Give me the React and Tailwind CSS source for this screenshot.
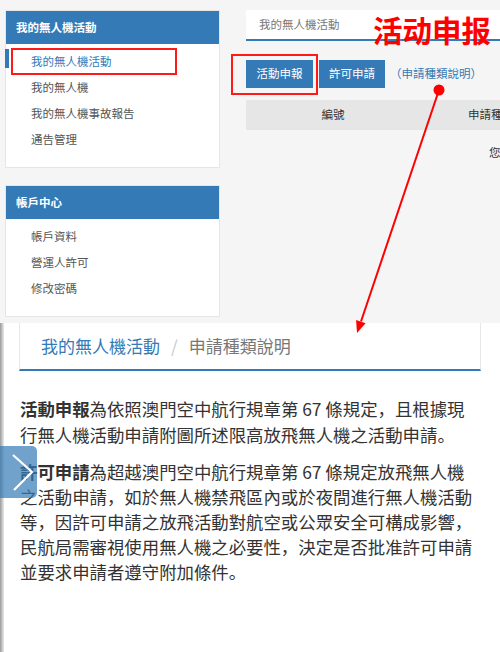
import React from "react";

const sideMenus = [
  {
    title: "我的無人機活動",
    items: ["我的無人機活動", "我的無人機", "我的無人機事故報告", "通告管理"],
    active: 0,
  },
  {
    title: "帳戶中心",
    items: ["帳戶資料", "營運人許可", "修改密碼"],
    active: -1,
  },
];

function SidePanel({ title, items, active }) {
  return (
    <div className="bg-white border border-[#e6e6e6]">
      <div className="h-[33px] bg-[#337ab7] text-white font-bold text-[11.5px] pl-[10px] flex items-center">
        {title}
      </div>
      <ul className="pt-[5px] pb-[14px]">
        {items.map((item, i) => (
          <li
            key={item}
            className={
              "relative h-[26px] flex items-center pl-[25px] text-[11.5px] " +
              (i === active ? "text-[#337ab7]" : "text-[#555]")
            }
          >
            {i === active && <span className="absolute left-[-1px] top-0 w-[4px] h-[19px] bg-[#337ab7]" />}
            {item}
          </li>
        ))}
      </ul>
    </div>
  );
}

export default function App() {
  return (
    <div className="relative w-[500px] h-[652px] overflow-hidden bg-white font-['Noto_Sans_CJK_SC','Noto_Sans_CJK_TC',sans-serif]">
      {/* desktop view */}
      <section className="h-[323px] bg-[#f5f5f5] flex pt-[10px] pl-[5px] overflow-hidden">
        <aside className="w-[215px] shrink-0 flex flex-col gap-[17px]">
          {sideMenus.map((m) => (
            <SidePanel key={m.title} {...m} />
          ))}
        </aside>

        <main className="ml-[26px] w-[400px] shrink-0">
          <div className="h-[31px] bg-white border-b-2 border-[#337ab7] pl-[13px] flex items-center text-[11.5px] text-[#777]">
            我的無人機活動
          </div>

          <div className="mt-[19px] flex items-center">
            <button className="h-[28px] w-[67px] bg-[#337ab7] text-white text-[11.5px]">活動申報</button>
            <button className="ml-[6px] h-[28px] w-[66px] bg-[#337ab7] text-white text-[11.5px]">許可申請</button>
            <span className="ml-[5px] text-[11.5px] text-[#337ab7]">（申請種類說明）</span>
          </div>

          <div className="mt-[12px] h-[30px] bg-[#e6e6e6] flex items-center text-[11.5px] text-[#333]">
            <div className="w-[174px] text-center">編號</div>
            <div className="ml-[48px]">申請種類</div>
          </div>

          <div className="mt-[14px] pl-[243px] text-[11.5px] text-[#333]">您尚未有任何申請記錄</div>
        </main>
      </section>

      {/* mobile view */}
      <section className="relative h-[329px] flex bg-white">
        <div className="w-[4px] shrink-0 bg-gradient-to-r from-[#9a9a9a] to-[#ededed]" />
        <div className="flex-1">
          <div className="ml-[15px] w-[462px] h-[48px] border-x border-[#e8e8e8] border-b-2 border-b-[#337ab7] flex items-center pl-[21px] text-[17px]">
            <span className="text-[#337ab7]">我的無人機活動</span>
            <span className="mx-[11px] text-[#c8c8c8]">/</span>
            <span className="text-[#777]">申請種類說明</span>
          </div>

          <div className="mt-[25px] pl-[16px] text-[17.4px] leading-[25.5px] text-[#333] whitespace-nowrap">
            <p>
              <b>活動申報</b>為依照澳門空中航行規章第 67 條規定，且根據現
              <br />
              行無人機活動申請附圖所述限高放飛無人機之活動申請。
            </p>
            <p className="mt-[12px] leading-[25px]">
              <b>許可申請</b>為超越澳門空中航行規章第 67 條規定放飛無人機
              <br />
              之活動申請，如於無人機禁飛區內或於夜間進行無人機活動
              <br />
              等，因許可申請之放飛活動對航空或公眾安全可構成影響，
              <br />
              民航局需審視使用無人機之必要性，決定是否批准許可申請
              <br />
              並要求申請者遵守附加條件。
            </p>
          </div>
        </div>

        <div className="absolute left-0 top-[123px] w-[37px] h-[52px] rounded-r-[5px] bg-[#337ab7]/70 flex items-center justify-center">
          <svg width="30" height="42" viewBox="0 0 30 42" fill="none">
            <path d="M9 4 L28 21 L10 39" stroke="white" strokeWidth="2.2" />
          </svg>
        </div>
      </section>

      {/* annotations */}
      <div className="absolute left-[11px] top-[48px] w-[166px] h-[27px] border-2 border-[#ff1a1a]" />
      <div className="absolute left-[231px] top-[54px] w-[87px] h-[41px] border-2 border-[#ff1a1a]" />
      <div className="absolute left-[373px] top-[15px] text-[29.5px] leading-none font-bold text-[#ff0000]">活动申报</div>
      <svg className="absolute inset-0 pointer-events-none" width="500" height="652">
        <circle cx="439" cy="90" r="5.5" fill="#ff0000" />
        <line x1="439" y1="90" x2="361" y2="321.5" stroke="#ff0000" strokeWidth="2" />
        <polygon points="357,333 365.6,323.2 356.1,320" fill="#ff0000" />
      </svg>
    </div>
  );
}
